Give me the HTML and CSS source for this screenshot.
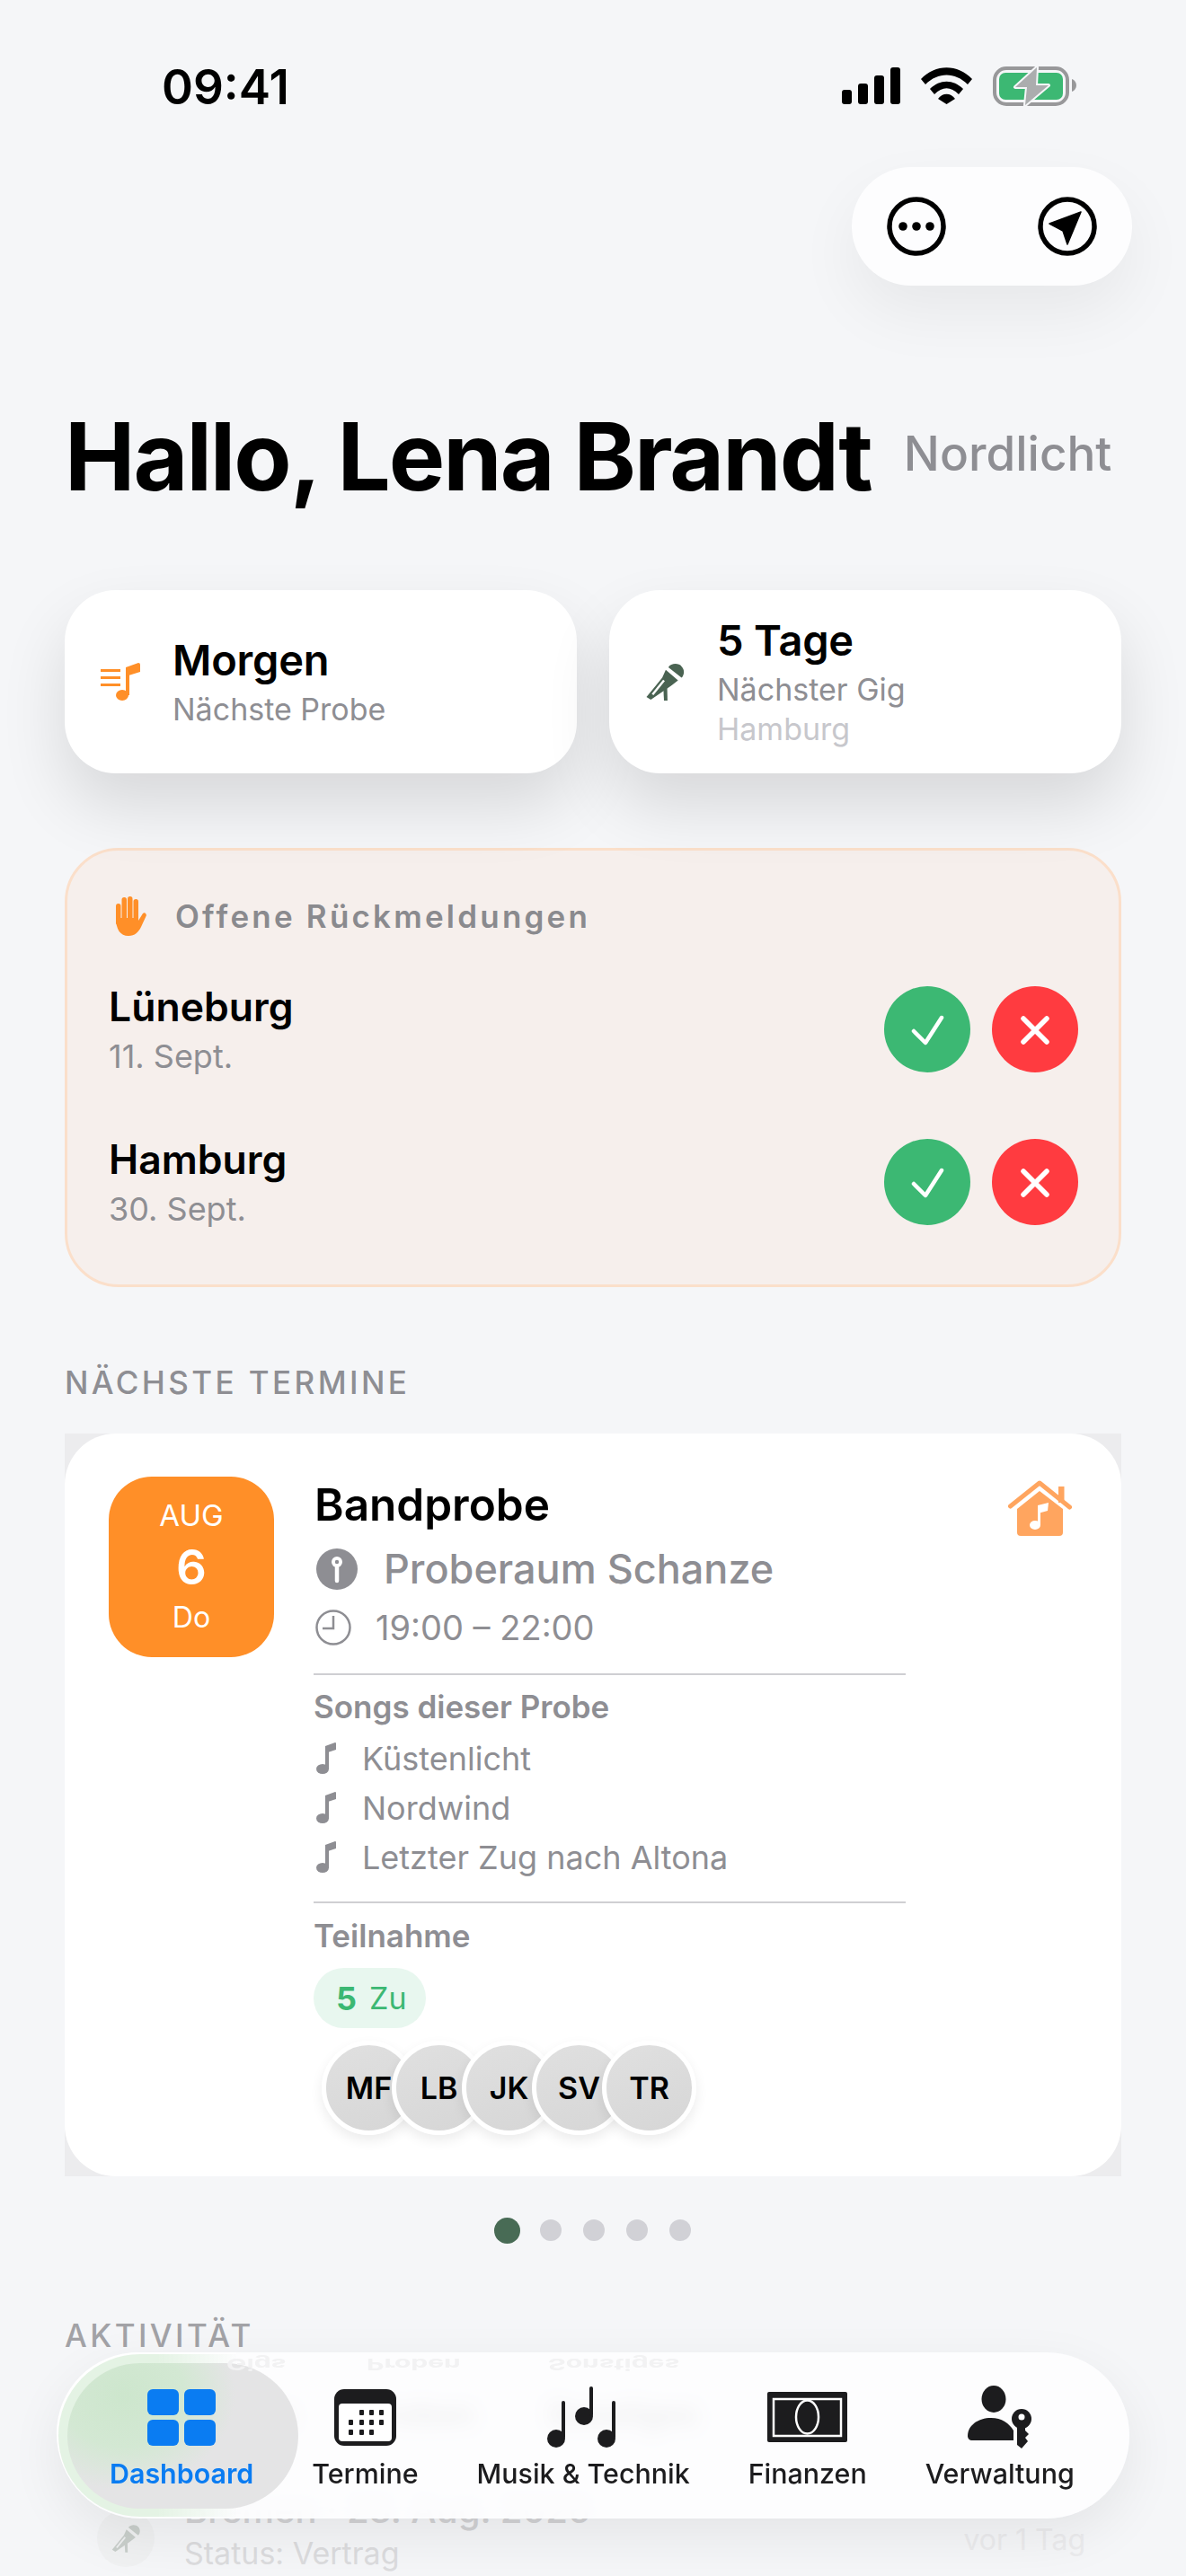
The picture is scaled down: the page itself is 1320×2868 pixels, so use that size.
FILE: index.html
```html
<!DOCTYPE html>
<html lang="de">
<head>
<meta charset="utf-8">
<title>Dashboard</title>
<link rel="stylesheet" href="styles.css">
</head>
<body>
<div class="page">
  <header class="status">
    <span class="time">09:41</span>
    <div class="status-icons">
      <svg class="i-signal" viewBox="0 0 65 41"><rect x="0" y="25" width="11" height="16" rx="3"/><rect x="18" y="18" width="11" height="23" rx="3"/><rect x="36" y="9" width="11" height="32" rx="3"/><rect x="54" y="0" width="11" height="41" rx="3"/></svg>
      <svg class="i-wifi" viewBox="0 0 57 41"><path d="M0 13C16-4 41-4 57 13L52 19C38 5 19 5 5 19Z"/><path d="M10 24C21 13 36 13 47 24L42 30C33 21 24 21 15 30Z"/><path d="M19 35C24 28 33 28 38 35L28.500 41Z"/></svg>
      <svg class="i-batt" viewBox="0 0 93 44"><rect x="2" y="2" width="81" height="40" rx="13" fill="none" stroke="#98989a" stroke-width="4"/><rect x="7" y="7" width="71" height="30" rx="7" fill="#3cb873"/><path d="M88 14C91 15 93 18 93 21C93 24 91 27 88 28Z" fill="#98989a"/><path d="M49 1L25 23H38L36 43L62 21H48Z" fill="#abadae" stroke="#f5f6f8" stroke-width="4" stroke-linejoin="round" paint-order="stroke"/></svg>
    </div>
  </header>

  <div class="action-row">
    <div class="action-pill">
      <svg class="i-action" viewBox="0 0 66 66"><circle cx="33" cy="33" r="30" fill="none" stroke="#000" stroke-width="5.500"/><circle cx="18" cy="33" r="4.800"/><circle cx="33" cy="33" r="4.800"/><circle cx="48" cy="33" r="4.800"/></svg>
      <svg class="i-action" viewBox="0 0 66 66"><circle cx="33" cy="33" r="30" fill="none" stroke="#000" stroke-width="5.500"/><path d="M48 17L13 30L28 38L33 53Z" stroke="#000" stroke-width="1.500" stroke-linejoin="round"/></svg>
    </div>
  </div>

  <div class="title-row">
    <h1 class="title">Hallo, Lena Brandt</h1>
    <span class="band">Nordlicht</span>
  </div>

  <div class="summary">
    <div class="stat">
      <svg class="i-stat" viewBox="0 0 44 42"><g fill="#ff8f28"><rect x="0" y="7" width="22" height="3"/><rect x="0" y="15" width="22" height="3"/><rect x="0" y="23" width="22" height="3"/><ellipse cx="24" cy="36" rx="7" ry="6"/><rect x="28" y="5" width="4" height="31"/><path d="M28 5L42 0Q44 0 44 2V10L28 15Z"/></g></svg>
      <div class="stat-text">
        <div class="stat-main">Morgen</div>
        <div class="stat-sub">Nächste Probe</div>
      </div>
    </div>
    <div class="stat">
      <svg class="i-stat" viewBox="0 0 44 43"><g fill="#4a6352"><path d="M26 5C29 0 38 0 41 4C45 8 44 14 41 17Z"/><path d="M23 8L37 20L28 27L6 42L1 39L19 17Z"/><path d="M20 24H24.500L25 43H21Z"/></g><path d="M21 20L8 36" fill="none" stroke="#fff" stroke-width="2.500"/></svg>
      <div class="stat-text">
        <div class="stat-main">5 Tage</div>
        <div class="stat-sub">Nächster Gig</div>
        <div class="stat-extra">Hamburg</div>
      </div>
    </div>
  </div>

  <section class="pending">
    <div class="pending-head">
      <svg class="i-hand" viewBox="0 0 36 45"><g fill="#ff8f28"><rect x="1" y="8" width="5.500" height="24" rx="2.700"/><rect x="7.500" y="1" width="5.500" height="28" rx="2.700"/><rect x="14" y="0" width="5.500" height="28" rx="2.700"/><rect x="20.500" y="3" width="5.500" height="26" rx="2.700"/><path d="M1 24H26V27L31 19Q34 17 35 21L29 34C26 40 22 44 15 44C6 44 1 37 1 24Z"/></g></svg>
      <span class="pending-label">Offene Rückmeldungen</span>
    </div>
    <div class="pending-list">
      <div class="pending-row">
        <div class="pending-text">
          <div class="pending-name">Lüneburg</div>
          <div class="pending-date">11. Sept.</div>
        </div>
        <div class="pending-actions">
          <span class="round yes"><svg viewBox="0 0 96 96"><path d="M33 50L46 63L64 35" fill="none" stroke="#fff" stroke-width="4.500" stroke-linecap="round" stroke-linejoin="round"/></svg></span>
          <span class="round no"><svg viewBox="0 0 96 96"><path d="M35 36L61 62M61 36L35 62" fill="none" stroke="#fff" stroke-width="5.500" stroke-linecap="round"/></svg></span>
        </div>
      </div>
      <div class="pending-row">
        <div class="pending-text">
          <div class="pending-name">Hamburg</div>
          <div class="pending-date">30. Sept.</div>
        </div>
        <div class="pending-actions">
          <span class="round yes"><svg viewBox="0 0 96 96"><path d="M33 50L46 63L64 35" fill="none" stroke="#fff" stroke-width="4.500" stroke-linecap="round" stroke-linejoin="round"/></svg></span>
          <span class="round no"><svg viewBox="0 0 96 96"><path d="M35 36L61 62M61 36L35 62" fill="none" stroke="#fff" stroke-width="5.500" stroke-linecap="round"/></svg></span>
        </div>
      </div>
    </div>
  </section>

  <h2 class="section-title first">NÄCHSTE TERMINE</h2>

  <div class="event-clip">
    <article class="event">
      <div class="date-tile">
        <div class="d-month">AUG</div>
        <div class="d-day">6</div>
        <div class="d-week">Do</div>
      </div>
      <div class="event-body">
        <div class="event-title">Bandprobe</div>
        <div class="event-place">
          <svg class="i-pin" viewBox="0 0 46 46"><circle cx="23" cy="23" r="23" fill="#8e8e93"/><path d="M23 18V36" stroke="#fff" stroke-width="4.500" stroke-linecap="round"/><circle cx="23" cy="15" r="6" fill="#fff"/><circle cx="23" cy="15" r="2.200" fill="#8e8e93"/></svg>
          <span>Proberaum Schanze</span>
        </div>
        <div class="event-time">
          <svg class="i-clock" viewBox="0 0 40 40"><circle cx="20" cy="20" r="18.500" fill="none" stroke="#8e8e93" stroke-width="2.500"/><path d="M20 7V21H8" fill="none" stroke="#8e8e93" stroke-width="2.500"/></svg>
          <span>19:00 – 22:00</span>
        </div>
        <div class="rule rule-a"></div>
        <div class="sub-head songs-head">Songs dieser Probe</div>
        <ul class="songs">
          <li><svg class="i-note" viewBox="0 0 22 35"><g fill="#8e8e93"><ellipse cx="7" cy="29.500" rx="7" ry="5.500"/><rect x="10" y="4" width="4" height="26"/><path d="M10 4L21 0Q22 0 22 1V8L10 12Z"/></g></svg>Küstenlicht</li>
          <li><svg class="i-note" viewBox="0 0 22 35"><g fill="#8e8e93"><ellipse cx="7" cy="29.500" rx="7" ry="5.500"/><rect x="10" y="4" width="4" height="26"/><path d="M10 4L21 0Q22 0 22 1V8L10 12Z"/></g></svg>Nordwind</li>
          <li><svg class="i-note" viewBox="0 0 22 35"><g fill="#8e8e93"><ellipse cx="7" cy="29.500" rx="7" ry="5.500"/><rect x="10" y="4" width="4" height="26"/><path d="M10 4L21 0Q22 0 22 1V8L10 12Z"/></g></svg>Letzter Zug nach Altona</li>
        </ul>
        <div class="rule rule-b"></div>
        <div class="sub-head part-head">Teilnahme</div>
        <div class="count-pill"><b>5</b><span>Zu</span></div>
        <div class="avatars">
          <span class="avatar">MF</span>
          <span class="avatar">LB</span>
          <span class="avatar">JK</span>
          <span class="avatar">SV</span>
          <span class="avatar">TR</span>
        </div>
      </div>
      <svg class="i-house" viewBox="0 0 71 63"><rect x="56" y="7" width="6.500" height="18" fill="#ffa55f"/><path d="M2.500 29L35 3L68.500 30" fill="none" stroke="#ffa55f" stroke-width="5" stroke-linecap="round" stroke-linejoin="round"/><path d="M35 12L61 32V58Q61 62 57 62H14Q10 62 10 58V32Z" fill="#ffa55f"/><g fill="#fff"><ellipse cx="30" cy="50" rx="6" ry="5"/><rect x="33" y="28" width="3" height="22"/><path d="M33 28L45 25L44 34L33 37Z"/></g></svg>
    </article>
  </div>

  <div class="dots">
    <span class="dot on"></span><span class="dot"></span><span class="dot"></span><span class="dot"></span><span class="dot"></span>
  </div>

  <h2 class="section-title second">AKTIVITÄT</h2>

  <div class="tabs">
    <span class="tab-gigs">Gigs</span>
    <span class="tab-proben">Proben</span>
    <span>Sonstiges</span>
  </div>

  <div class="activity">
    <span class="act-icon"><svg viewBox="0 0 44 43"><g fill="#c9cfcb"><path d="M26 5C29 0 38 0 41 4C45 8 44 14 41 17Z"/><path d="M23 8L37 20L28 27L6 42L1 39L19 17Z"/><path d="M20 24H24.500L25 43H21Z"/></g><path d="M21 20L8 36" fill="none" stroke="#f0f1f2" stroke-width="2.500"/></svg></span>
    <div class="act-text">
      <div class="act-title">Bremen · 23. Aug. 2026</div>
      <div class="act-sub">Status: Vertrag</div>
    </div>
    <span class="act-when">vor 1 Tag</span>
  </div>

  <nav class="tabbar">
    <span class="lens-rim"></span>
    <span class="lens"></span>
    <div class="ghost"><span class="ghost-a">Gigs</span><span class="ghost-b">Proben</span><span>Sonstiges</span></div>
    <a class="nav-item active">
      <span class="nav-icon"><svg class="n-dash" viewBox="0 0 76 63"><g fill="#0a7cf2"><rect x="0" y="0" width="35" height="29" rx="6"/><rect x="41" y="0" width="35" height="29" rx="6"/><rect x="0" y="34" width="35" height="29" rx="6"/><rect x="41" y="34" width="35" height="29" rx="6"/></g></svg></span>
      <span class="nav-label">Dashboard</span>
    </a>
    <a class="nav-item">
      <span class="nav-icon"><svg class="n-cal" viewBox="0 0 69 63"><rect width="69" height="63" rx="11" fill="#1c1c1e"/><rect x="5" y="16" width="59" height="42" rx="4" fill="#fff"/><g fill="#1c1c1e"><rect x="28" y="23" width="5" height="6" rx="1"/><rect x="39" y="23" width="5" height="6" rx="1"/><rect x="50" y="23" width="5" height="6" rx="1"/><rect x="16" y="34" width="5" height="6" rx="1"/><rect x="28" y="34" width="5" height="6" rx="1"/><rect x="39" y="34" width="5" height="6" rx="1"/><rect x="50" y="34" width="5" height="6" rx="1"/><rect x="16" y="45" width="5" height="6" rx="1"/><rect x="28" y="45" width="5" height="6" rx="1"/><rect x="39" y="45" width="5" height="6" rx="1"/></g></svg></span>
      <span class="nav-label">Termine</span>
    </a>
    <a class="nav-item">
      <span class="nav-icon"><svg class="n-mus" viewBox="0 0 80 68"><g fill="#1c1c1e"><ellipse cx="10" cy="58" rx="10" ry="10"/><rect x="16" y="16" width="4" height="42" rx="2"/><ellipse cx="41" cy="33" rx="10" ry="10"/><rect x="47" y="0" width="4" height="33" rx="2"/><ellipse cx="66" cy="58" rx="10" ry="10"/><rect x="72" y="16" width="4" height="42" rx="2"/></g></svg></span>
      <span class="nav-label">Musik &amp; Technik</span>
    </a>
    <a class="nav-item">
      <span class="nav-icon"><svg class="n-fin" viewBox="0 0 89 56"><rect width="89" height="56" rx="2" fill="#1c1c1e"/><rect x="7" y="8" width="75" height="41" fill="none" stroke="#fff" stroke-width="2.500"/><ellipse cx="44.500" cy="28" rx="12.500" ry="18.500" fill="#1c1c1e" stroke="#fff" stroke-width="2.500"/></svg></span>
      <span class="nav-label">Finanzen</span>
    </a>
    <a class="nav-item">
      <span class="nav-icon"><svg class="n-adm" viewBox="0 0 71 70"><g fill="#1c1c1e"><ellipse cx="29" cy="15" rx="13.500" ry="15"/><path d="M0 56C0 44 12 36 26 36C38 36 46 42 51 50V61H5C2 61 0 59 0 56Z"/><circle cx="60" cy="37" r="11"/><path d="M55 44H64V50L68 54L64 58L67 62L60 70L55 66Z"/></g><circle cx="60" cy="35" r="3.500" fill="#fff"/></svg></span>
      <span class="nav-label">Verwaltung</span>
    </a>
  </nav>
</div>
</body>
</html>
```

FILE: styles.css
```css
* { box-sizing: border-box; }
html, body { margin: 0; padding: 0; }
body {
  background: #f5f6f8;
  color: #000;
  font-family: Inter, "Liberation Sans", sans-serif;
}
svg { display: block; flex: none; }
h1, h2, ul { margin: 0; padding: 0; }

.page {
  position: relative;
  width: 1320px;
  height: 2868px;
  overflow: hidden;
}

/* status bar */
.status {
  height: 186px;
  padding: 72px 122px 0 180px;
  display: flex;
  justify-content: space-between;
  align-items: flex-start;
}
.time { font-size: 53px; font-weight: 600; line-height: 50px; }
.status-icons { display: flex; align-items: flex-start; gap: 23px; padding-top: 3px; }
.i-signal { width: 65px; height: 41px; }
.i-wifi { width: 57px; height: 41px; }
.i-batt { width: 93px; height: 44px; margin-top: -1px; }

/* floating actions */
.action-row { display: flex; justify-content: flex-end; padding-right: 60px; }
.action-pill {
  width: 312px;
  height: 132px;
  border-radius: 66px;
  background: #fdfdfe;
  box-shadow: 0 30px 70px rgba(0, 0, 0, .06);
  display: flex;
  align-items: center;
  justify-content: space-between;
  padding: 0 39px;
}
.i-action { width: 66px; height: 66px; }

/* title */
.title-row {
  margin-top: 130px;
  padding-left: 72px;
  display: flex;
  align-items: center;
  gap: 36px;
}
.title {
  font-size: 105px;
  line-height: 120px;
  font-weight: 700;
  letter-spacing: -2px;
  white-space: nowrap;
}
.band { font-size: 53px; font-weight: 500; color: #8e8e93; white-space: nowrap; margin-top: -6px; }

/* stat cards */
.summary {
  margin: 89px 72px 0;
  display: grid;
  grid-template-columns: 1fr 1fr;
  gap: 36px;
}
.stat {
  height: 204px;
  background: #fff;
  border-radius: 57px;
  box-shadow: 0 36px 72px rgba(0, 0, 0, .12);
  display: flex;
  align-items: center;
  gap: 36px;
  padding-left: 40px;
}
.i-stat { width: 44px; height: 42px; }
.stat-text { padding-top: 3px; }
.stat-main { font-size: 47px; line-height: 52px; font-weight: 600; letter-spacing: -.2px; }
.stat-sub { font-size: 34px; line-height: 44px; color: #8e8e93; margin-top: 7px; }
.stat-extra { font-size: 34px; line-height: 44px; color: #c7c7cc; }

/* pending answers */
.pending {
  margin: 83px 72px 0;
  height: 489px;
  border: 3px solid #fbdfca;
  border-radius: 60px;
  background: #f6efec;
  padding: 48px 45px 0 46px;
}
.pending-head { display: flex; align-items: center; gap: 31px; padding-left: 7px; height: 50px; }
.i-hand { width: 36px; height: 45px; }
.pending-label { font-size: 35px; font-weight: 600; letter-spacing: 3.200px; color: #8a8a8e; }
.pending-list { margin-top: 53px; display: flex; flex-direction: column; gap: 74px; }
.pending-row { display: flex; justify-content: space-between; align-items: center; height: 96px; }
.pending-text { padding-top: 2px; }
.pending-name { font-size: 44.500px; line-height: 54px; font-weight: 600; }
.pending-date { font-size: 36px; line-height: 48px; color: #8e8e93; margin-top: 4px; }
.pending-actions { display: flex; gap: 24px; }
.round { width: 96px; height: 96px; border-radius: 50%; display: block; }
.yes { background: #3cb873; }
.no { background: #ff3b40; }

/* section titles */
.section-title {
  margin-left: 72px;
  font-size: 35px;
  line-height: 44px;
  font-weight: 500;
  letter-spacing: 3.400px;
  color: #8e8e93;
}
.section-title.first { margin-top: 84px; }
.section-title.second { margin-top: 80px; color: #a2a2a6; }

/* event card */
.event-clip {
  margin: 35px 72px 0;
  height: 827px;
  background: #ececee;
  overflow: hidden;
}
.event {
  height: 827px;
  background: #fff;
  border-radius: 57px;
  display: flex;
  align-items: flex-start;
  padding: 48px 55px 0 49px;
}
.date-tile {
  flex: none;
  width: 184px;
  height: 201px;
  border-radius: 48px;
  background: #ff8f28;
  color: #fff;
  text-align: center;
  padding-top: 23px;
}
.d-month { font-size: 33px; line-height: 40px; }
.d-day { font-size: 53px; line-height: 60px; font-weight: 600; margin-top: 8px; }
.d-week { font-size: 32px; line-height: 40px; margin-top: 6px; }

.event-body { flex: none; width: 659px; margin-left: 44px; }
.event-title { font-size: 49.500px; line-height: 60px; font-weight: 600; margin-top: 1px; padding-left: 1px; }
.event-place {
  margin-top: 17px;
  display: flex;
  align-items: center;
  gap: 29px;
  padding-left: 3px;
  font-size: 45px;
  line-height: 50px;
  font-weight: 500;
  color: #8e8e93;
}
.i-pin { width: 46px; height: 46px; }
.event-time {
  margin-top: 17px;
  display: flex;
  align-items: center;
  gap: 27px;
  padding-left: 2px;
  font-size: 38px;
  line-height: 46px;
  color: #8e8e93;
}
.i-clock { width: 40px; height: 40px; }
.rule { height: 2px; background: #cfcfd2; }
.rule-a { margin-top: 28px; }
.rule-b { margin-top: 22px; }
.sub-head { font-size: 35px; line-height: 44px; font-weight: 600; color: #8e8e93; }
.songs-head { margin-top: 13px; }
.part-head { margin-top: 14px; }
.songs { list-style: none; margin-top: 8px; }
.songs li {
  height: 55px;
  display: flex;
  align-items: center;
  gap: 29px;
  padding-left: 3px;
  font-size: 36px;
  color: #8e8e93;
}
.i-note { width: 22px; height: 35px; }
.count-pill {
  margin-top: 14px;
  width: 125px;
  height: 67px;
  border-radius: 34px;
  background: #e8f7ef;
  color: #3cb873;
  display: flex;
  align-items: center;
  gap: 14px;
  padding-left: 25px;
  font-size: 34px;
}
.count-pill b { font-size: 36px; font-weight: 700; }
.avatars { margin: 14px 0 0 9px; display: flex; }
.avatar {
  width: 105px;
  height: 105px;
  flex: none;
  border-radius: 50%;
  border: 5px solid #fff;
  background: linear-gradient(160deg, #e0e0e0, #d6d6d6);
  box-shadow: 0 6px 14px rgba(0, 0, 0, .08);
  display: flex;
  align-items: center;
  justify-content: center;
  font-size: 34px;
  font-weight: 600;
  margin-right: -27px;
}
.i-house { width: 71px; height: 63px; margin: 4px 0 0 auto; }

/* pager */
.dots { margin-top: 45px; height: 30px; display: flex; align-items: center; justify-content: center; gap: 24px; padding-right: 2px; }
.dot { width: 24px; height: 24px; border-radius: 50%; background: #d1d1d6; }
.dot.on { width: 29px; height: 29px; margin-right: -2px; background: #486b55; }

/* content below the bar */
.tabs {
  margin-top: 35px;
  height: 60px;
  display: flex;
  align-items: center;
  padding-left: 252px;
  font-size: 34px;
  font-weight: 700;
  color: #444;
}
.tab-gigs { width: 156px; }
.tab-proben { width: 202px; }
.activity {
  margin-top: 53px;
  padding: 0 112px 0 108px;
  display: flex;
  align-items: flex-start;
}
.act-icon {
  width: 64px;
  height: 64px;
  margin-top: 24px;
  border-radius: 50%;
  background: #f0f1f2;
  display: flex;
  align-items: center;
  justify-content: center;
}
.act-icon svg { width: 32px; height: 32px; }
.act-text { margin-left: 33px; flex: 1; }
.act-title { font-size: 40px; line-height: 50px; font-weight: 500; color: #d2d2d4; }
.act-sub { font-size: 34px; line-height: 46px; color: #dcdcde; }
.act-when { font-size: 32px; margin-top: 38px; color: #ebebed; }

/* tab bar */
.tabbar {
  position: absolute;
  left: 64px;
  top: 2619px;
  width: 1193px;
  height: 185px;
  border-radius: 93px;
  background: rgba(253, 253, 254, .93);
  -webkit-backdrop-filter: blur(10px);
  backdrop-filter: blur(10px);
  box-shadow: 0 20px 60px rgba(0, 0, 0, .07);
  display: flex;
  gap: 65px;
  padding: 37px 0 0 58px;
}
.lens-rim {
  position: absolute;
  left: 1px;
  top: 2px;
  width: 200px;
  height: 181px;
  border-radius: 91px 0 0 91px;
  background: linear-gradient(90deg, #e4f3e4 0%, #e4f3e4 55%, rgba(228, 243, 228, 0) 100%);
  box-shadow: -2px -2px 0 #fff;
}
.lens {
  position: absolute;
  left: 11px;
  top: 12px;
  width: 257px;
  height: 162px;
  border-radius: 81px;
  background:
    radial-gradient(ellipse 125px 105px at 24% 22%, #cde6cd 0%, #d3e8d3 55%, rgba(205, 230, 205, 0) 100%),
    #e4e4e5;
}
.ghost {
  position: absolute;
  left: 188px;
  top: 4px;
  display: flex;
  font-size: 30px;
  font-weight: 700;
  line-height: 20px;
  height: 20px;
  color: #f2f2f3;
  transform: scaleY(-.6);
}
.ghost-a { width: 156px; }
.ghost-b { width: 202px; }
.nav-item {
  position: relative;
  display: flex;
  flex-direction: column;
  align-items: center;
  color: #1c1c1e;
}
.nav-icon { height: 70px; display: flex; align-items: center; justify-content: center; }
.nav-label { margin-top: 8px; font-size: 30.400px; line-height: 40px; font-weight: 500; white-space: nowrap; }
.active { color: #0a7cf2; }
.active .nav-label { font-weight: 600; }
.n-dash { width: 76px; height: 63px; }
.n-cal { width: 69px; height: 63px; }
.n-mus { width: 80px; height: 68px; }
.n-fin { width: 89px; height: 56px; }
.n-adm { width: 71px; height: 70px; }
```
